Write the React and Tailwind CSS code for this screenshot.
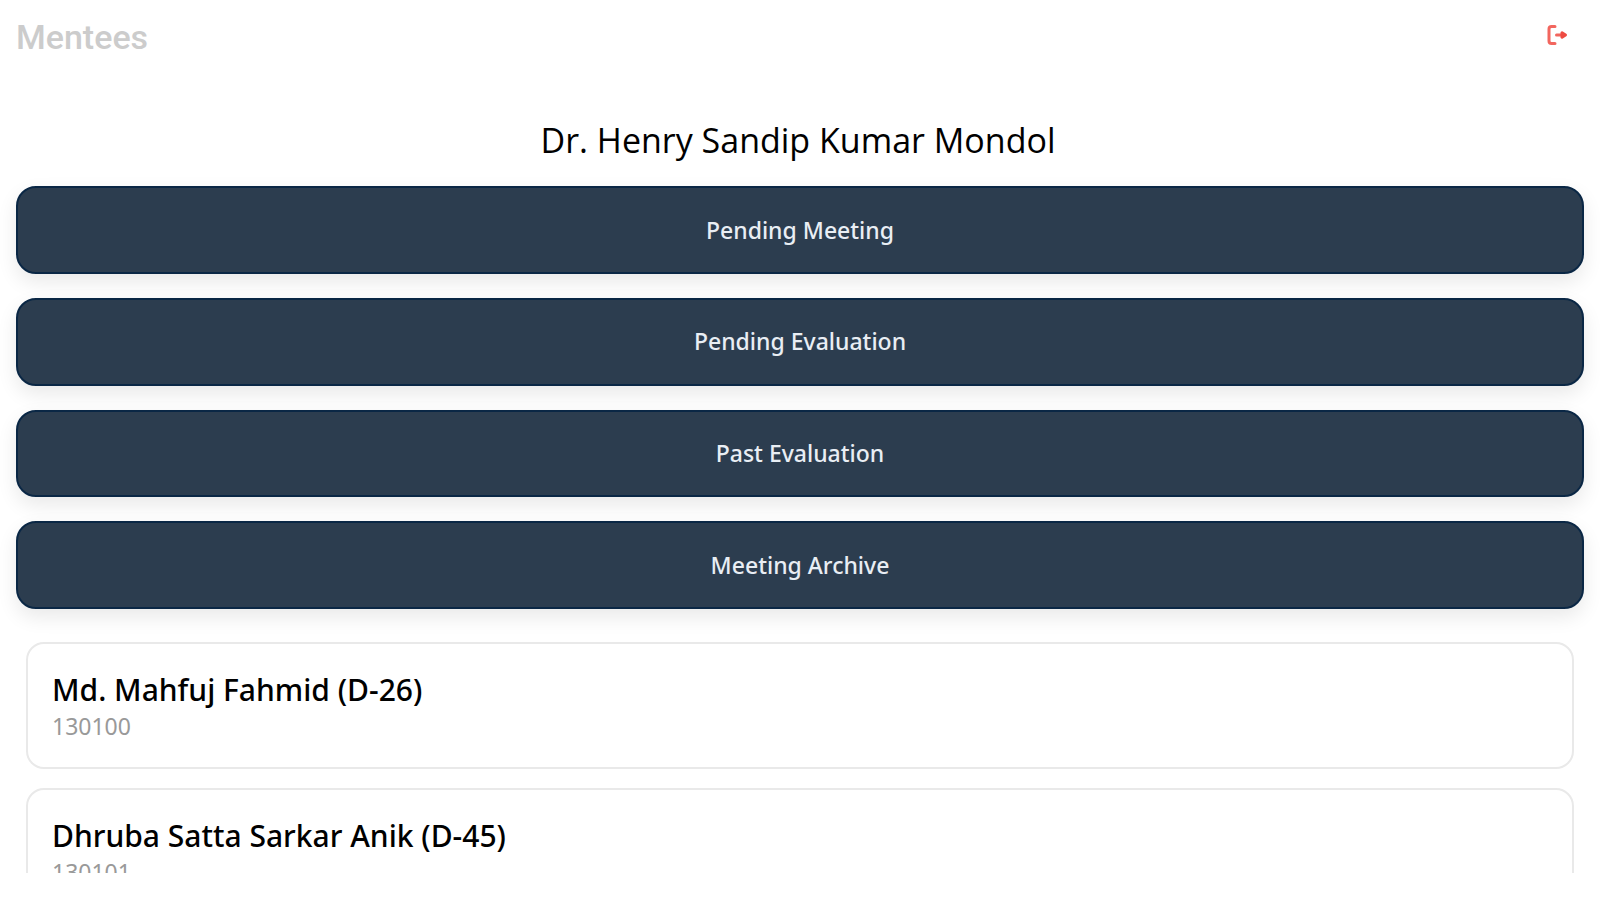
import React from "react";

const actions = ["Pending Meeting", "Pending Evaluation", "Past Evaluation", "Meeting Archive"];

const mentees = [
  { name: "Md. Mahfuj Fahmid (D-26)", id: "130100" },
  { name: "Dhruba Satta Sarkar Anik (D-45)", id: "130101" },
];

function LogoutIcon() {
  return (
    <svg viewBox="0 0 24 24" className="size-6" fill="none" stroke="#f2665e" strokeLinecap="round" strokeLinejoin="round" aria-hidden="true">
      <path d="M10 3.5H6.5Q4 3.5 4 6V18Q4 20.5 6.5 20.5H10" strokeWidth="3" />
      <path d="M11.5 12H18" strokeWidth="3" />
      <path d="M17 9.8L20.5 12L17 14.2Z" fill="#ee4b42" stroke="#ee4b42" strokeWidth="3" />
    </svg>
  );
}

export default function App() {
  return (
    <div className="flex h-screen flex-col bg-white pb-[27px] font-['Noto_Sans','Open_Sans',sans-serif] text-black">
      <header className="flex h-[74px] shrink-0 items-start justify-between pt-[17px] pr-[31px] pl-4">
        <h1 className="font-['Roboto',sans-serif] text-[34px] leading-10 font-medium text-[#cccccc]">Mentees</h1>
        <button type="button" aria-label="Log out" className="flex h-9 w-6 items-center justify-center">
          <LogoutIcon />
        </button>
      </header>
      <main className="flex min-h-0 flex-1 flex-col overflow-hidden px-4 pt-[42px]">
        <h2 className="shrink-0 pr-1 pb-[22px] text-center font-['Open_Sans','Noto_Sans',sans-serif] text-[34px] leading-12">
          Dr. Henry Sandip Kumar Mondol
        </h2>
        <nav className="flex h-[423px] shrink-0 flex-col gap-6">
          {actions.map((label) => (
            <button
              key={label}
              type="button"
              className="w-full flex-1 rounded-[20px] border-2 border-[#0a2745] bg-[#2c3d4f] text-[23px] font-medium text-[#e9eef4] shadow-[0_8px_20px_rgba(0,0,0,0.09)]"
            >
              {label}
            </button>
          ))}
        </nav>
        <ul className="flex shrink-0 flex-col gap-[19px] px-[10px] pt-[33px]">
          {mentees.map((mentee) => (
            <li key={mentee.id} className="h-[127px] rounded-[18px] border-2 border-[#e9e9e9] bg-white px-6 pt-[26px]">
              <h3 className="text-[30px] leading-10 font-medium">{mentee.name}</h3>
              <p className="text-[23px] leading-8 text-[#999999]">{mentee.id}</p>
            </li>
          ))}
        </ul>
      </main>
    </div>
  );
}
